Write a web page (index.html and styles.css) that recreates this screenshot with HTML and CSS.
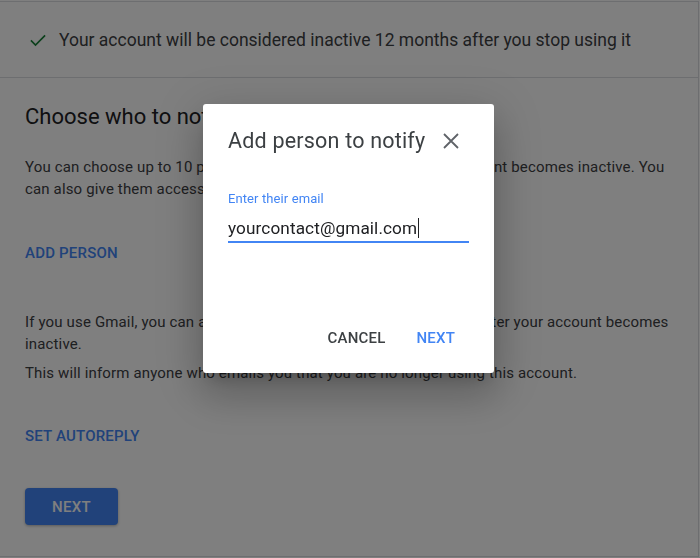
FILE: index.html
```html
<!DOCTYPE html>
<html>
<head>
<meta charset="utf-8">
<link rel="stylesheet" href="styles.css">
</head>
<body>
<div class="card">
  <div class="status">
    <svg class="check" width="20" height="20" viewBox="0 0 24 24"><path d="M3.5 12.5 L9 18 L20.5 6.5" fill="none" stroke="#188038" stroke-width="2"/></svg>
    <span>Your account will be considered inactive 12 months after you stop using it</span>
  </div>
  <div class="content">
    <h2 class="heading">Choose who to notify &amp; what to share</h2>
    <p class="para">You can choose up to 10 people to notify by email in case your account becomes inactive. You can also give them access to some of your data.</p>
    <a class="link add">ADD PERSON</a>
    <p class="para gmail">If you use Gmail, you can also set up an automatic email response after your account becomes inactive.</p>
    <p class="para inform">This will inform anyone who emails you that you are no longer using this account.</p>
    <a class="link auto">SET AUTOREPLY</a>
    <div class="actions"><button class="primary">NEXT</button></div>
  </div>
</div>
<div class="overlay"></div>
<div class="dialog">
  <div class="dlg-head">
    <h3 class="dlg-title">Add person to notify</h3>
    <svg class="close" width="24" height="24" viewBox="0 0 24 24"><path d="M5 5 L19 19 M19 5 L5 19" stroke="#5f6368" stroke-width="1.8" fill="none"/></svg>
  </div>
  <div class="field">
    <label class="field-label">Enter their email</label>
    <div class="field-input"><span>yourcontact@gmail.com</span><span class="caret"></span></div>
  </div>
  <div class="dlg-actions">
    <button class="text-btn cancel">CANCEL</button>
    <button class="text-btn next">NEXT</button>
  </div>
</div>
</body>
</html>
```

FILE: styles.css
```css
* { box-sizing: border-box; }
html, body { margin: 0; padding: 0; }
body {
  font-family: Roboto, "Noto Sans", Arial, sans-serif;
  color: #3c4043;
  background: #fff;
  width: 700px;
  height: 558px;
  overflow: hidden;
}
.card {
  margin: 1px 0 0 -1px;
  width: 700px;
  height: 556px;
  border: 1px solid #dadce0;
  background: #fff;
}
.status {
  height: 76px;
  border-bottom: 1px solid #dadce0;
  display: flex;
  align-items: center;
  padding-left: 28px;
  font-size: 17.5px;
  color: #3c4043;
}
.check { margin-right: 11px; flex: none; }
.content { padding: 0 0 0 25px; }
.heading {
  margin: 25px 0 0;
  font-size: 22px;
  line-height: 28px;
  font-weight: 400;
  color: #202124;
  white-space: nowrap;
}
.para {
  margin: 0;
  font-size: 15px;
  line-height: 22px;
  color: #3c4043;
  padding-right: 20px;
  letter-spacing: 0.15px;
}
.heading + .para { margin-top: 25px; }
.link {
  display: block;
  font-size: 15px;
  font-weight: 500;
  color: #4285f4;
  letter-spacing: 0.2px;
  line-height: 20px;
}
.add { margin-top: 43px; }
.gmail { margin-top: 48px; }
.inform { margin-top: 7px; }
.auto { margin-top: 42px; }
.actions { margin-top: 42px; }
.primary {
  width: 93px;
  height: 37px;
  border: none;
  border-radius: 4px;
  background: #4285f4;
  color: #fff;
  font-family: inherit;
  font-size: 15px;
  font-weight: 500;
  letter-spacing: 0.3px;
  box-shadow: 0 1px 3px rgba(0,0,0,0.3);
}
.overlay {
  position: fixed;
  inset: 0;
  background: rgba(0,0,0,0.5);
}
.dialog {
  position: absolute;
  left: 203px;
  top: 104px;
  width: 291px;
  height: 269px;
  background: #fff;
  border-radius: 3px;
  box-shadow: 0 11px 15px -7px rgba(0,0,0,0.2), 0 24px 38px 3px rgba(0,0,0,0.14), 0 9px 46px 8px rgba(0,0,0,0.12);
  padding: 23px 25px 0 25px;
  display: flex;
  flex-direction: column;
}
.dlg-head {
  display: flex;
  align-items: center;
  height: 28px;
}
.dlg-title {
  margin: 0;
  font-size: 21.5px;
  font-weight: 400;
  color: #3c4043;
  line-height: 28px;
  letter-spacing: 0.2px;
}
.close { margin-left: 14px; }
.field { margin-top: 36px; }
.field-label {
  display: block;
  font-size: 13px;
  line-height: 16px;
  color: #4285f4;
  letter-spacing: 0.1px;
}
.field-input {
  margin-top: 11px;
  height: 25px;
  border-bottom: 2px solid #4285f4;
  font-size: 17.2px;
  color: #202124;
  line-height: 20px;
  display: flex;
  align-items: flex-start;
  letter-spacing: 0.1px;
}
.caret {
  display: inline-block;
  width: 1px;
  height: 20px;
  background: #202124;
  margin-left: 1px;
}
.dlg-actions {
  margin-top: 77px;
  display: flex;
  justify-content: flex-end;
  gap: 15px;
  padding-right: 6px;
}
.text-btn {
  background: none;
  border: none;
  font-family: inherit;
  font-size: 15px;
  font-weight: 500;
  letter-spacing: 0.2px;
  padding: 8px 8px;
  line-height: 20px;
}
.cancel { color: #3c4043; }
.next { color: #4285f4; }
```
